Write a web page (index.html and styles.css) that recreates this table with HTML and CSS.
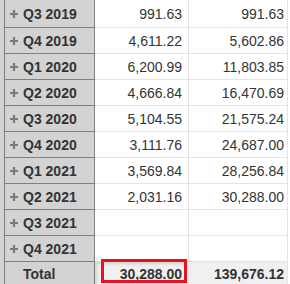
FILE: index.html
```html
<!DOCTYPE html>
<html>
<head>
<meta charset="utf-8">
<link rel="stylesheet" href="styles.css">
</head>
<body>
<div class="pivot">
  <div class="row first"><div class="strip"></div><div class="lbl"><svg class="plus" viewBox="0 0 8 8"><path d="M4 0V8M0 4H8"/></svg>Q3 2019</div><div class="cell">991.63</div><div class="cell c3">991.63</div></div>
  <div class="row"><div class="strip"></div><div class="lbl"><svg class="plus" viewBox="0 0 8 8"><path d="M4 0V8M0 4H8"/></svg>Q4 2019</div><div class="cell">4,611.22</div><div class="cell c3">5,602.86</div></div>
  <div class="row"><div class="strip"></div><div class="lbl"><svg class="plus" viewBox="0 0 8 8"><path d="M4 0V8M0 4H8"/></svg>Q1 2020</div><div class="cell">6,200.99</div><div class="cell c3">11,803.85</div></div>
  <div class="row"><div class="strip"></div><div class="lbl"><svg class="plus" viewBox="0 0 8 8"><path d="M4 0V8M0 4H8"/></svg>Q2 2020</div><div class="cell">4,666.84</div><div class="cell c3">16,470.69</div></div>
  <div class="row"><div class="strip"></div><div class="lbl"><svg class="plus" viewBox="0 0 8 8"><path d="M4 0V8M0 4H8"/></svg>Q3 2020</div><div class="cell">5,104.55</div><div class="cell c3">21,575.24</div></div>
  <div class="row"><div class="strip"></div><div class="lbl"><svg class="plus" viewBox="0 0 8 8"><path d="M4 0V8M0 4H8"/></svg>Q4 2020</div><div class="cell">3,111.76</div><div class="cell c3">24,687.00</div></div>
  <div class="row"><div class="strip"></div><div class="lbl"><svg class="plus" viewBox="0 0 8 8"><path d="M4 0V8M0 4H8"/></svg>Q1 2021</div><div class="cell">3,569.84</div><div class="cell c3">28,256.84</div></div>
  <div class="row"><div class="strip"></div><div class="lbl"><svg class="plus" viewBox="0 0 8 8"><path d="M4 0V8M0 4H8"/></svg>Q2 2021</div><div class="cell">2,031.16</div><div class="cell c3">30,288.00</div></div>
  <div class="row"><div class="strip"></div><div class="lbl"><svg class="plus" viewBox="0 0 8 8"><path d="M4 0V8M0 4H8"/></svg>Q3 2021</div><div class="cell"></div><div class="cell c3"></div></div>
  <div class="row"><div class="strip"></div><div class="lbl"><svg class="plus" viewBox="0 0 8 8"><path d="M4 0V8M0 4H8"/></svg>Q4 2021</div><div class="cell"></div><div class="cell c3"></div></div>
  <div class="row total"><div class="strip"></div><div class="lbl tlbl">Total</div><div class="cell tot hl">30,288.00</div><div class="cell c3 tot">139,676.12</div></div>
  <div class="redbox"></div>
</div>
</body>
</html>
```
FILE: styles.css
```css
html, body {
  margin: 0;
  padding: 0;
  background: #ffffff;
}
body {
  font-family: "Liberation Sans", Arial, sans-serif;
  font-size: 14px;
  color: #333333;
  overflow: hidden;
}
.pivot {
  position: relative;
  width: 290px;
}
.row {
  display: grid;
  grid-template-columns: 4px 91px 94px 99px;
  height: 26px;
}
.row.first {
  height: 28px;
}
.strip {
  background: #d3d3d3;
  border-bottom: 1px solid #d3d3d3;
}
.lbl {
  background: #d3d3d3;
  border-left: 1px solid #7f7f7f;
  border-right: 1px solid #7f7f7f;
  border-bottom: 1px solid #7f7f7f;
  font-weight: bold;
  display: flex;
  align-items: center;
  padding-left: 5px;
  white-space: nowrap;
}
.plus {
  width: 8px;
  height: 8px;
  margin-right: 5px;
  flex: none;
}
.plus path {
  stroke: #7a7a7a;
  stroke-width: 2.2;
  fill: none;
}
.cell {
  background: #ffffff;
  border-bottom: 1px solid #e4e4e4;
  border-right: 1px solid #e4e4e4;
  display: flex;
  align-items: center;
  justify-content: flex-end;
  padding-right: 6px;
}
.c3 {
  padding-right: 3px;
}
.total {
  height: 24px;
}
.total .lbl {
  border-bottom: none;
  padding-left: 18px;
}
.total .strip {
  border-bottom: none;
}
.tot {
  background: #f0f0f0;
  font-weight: bold;
  border-bottom: none;
}
.hl {
  box-shadow: inset 2px 2px 3px rgba(0, 0, 0, 0.12);
}
.redbox {
  position: absolute;
  left: 101px;
  top: 259px;
  width: 80px;
  height: 18px;
  border: 3px solid #e8141b;
}
```
